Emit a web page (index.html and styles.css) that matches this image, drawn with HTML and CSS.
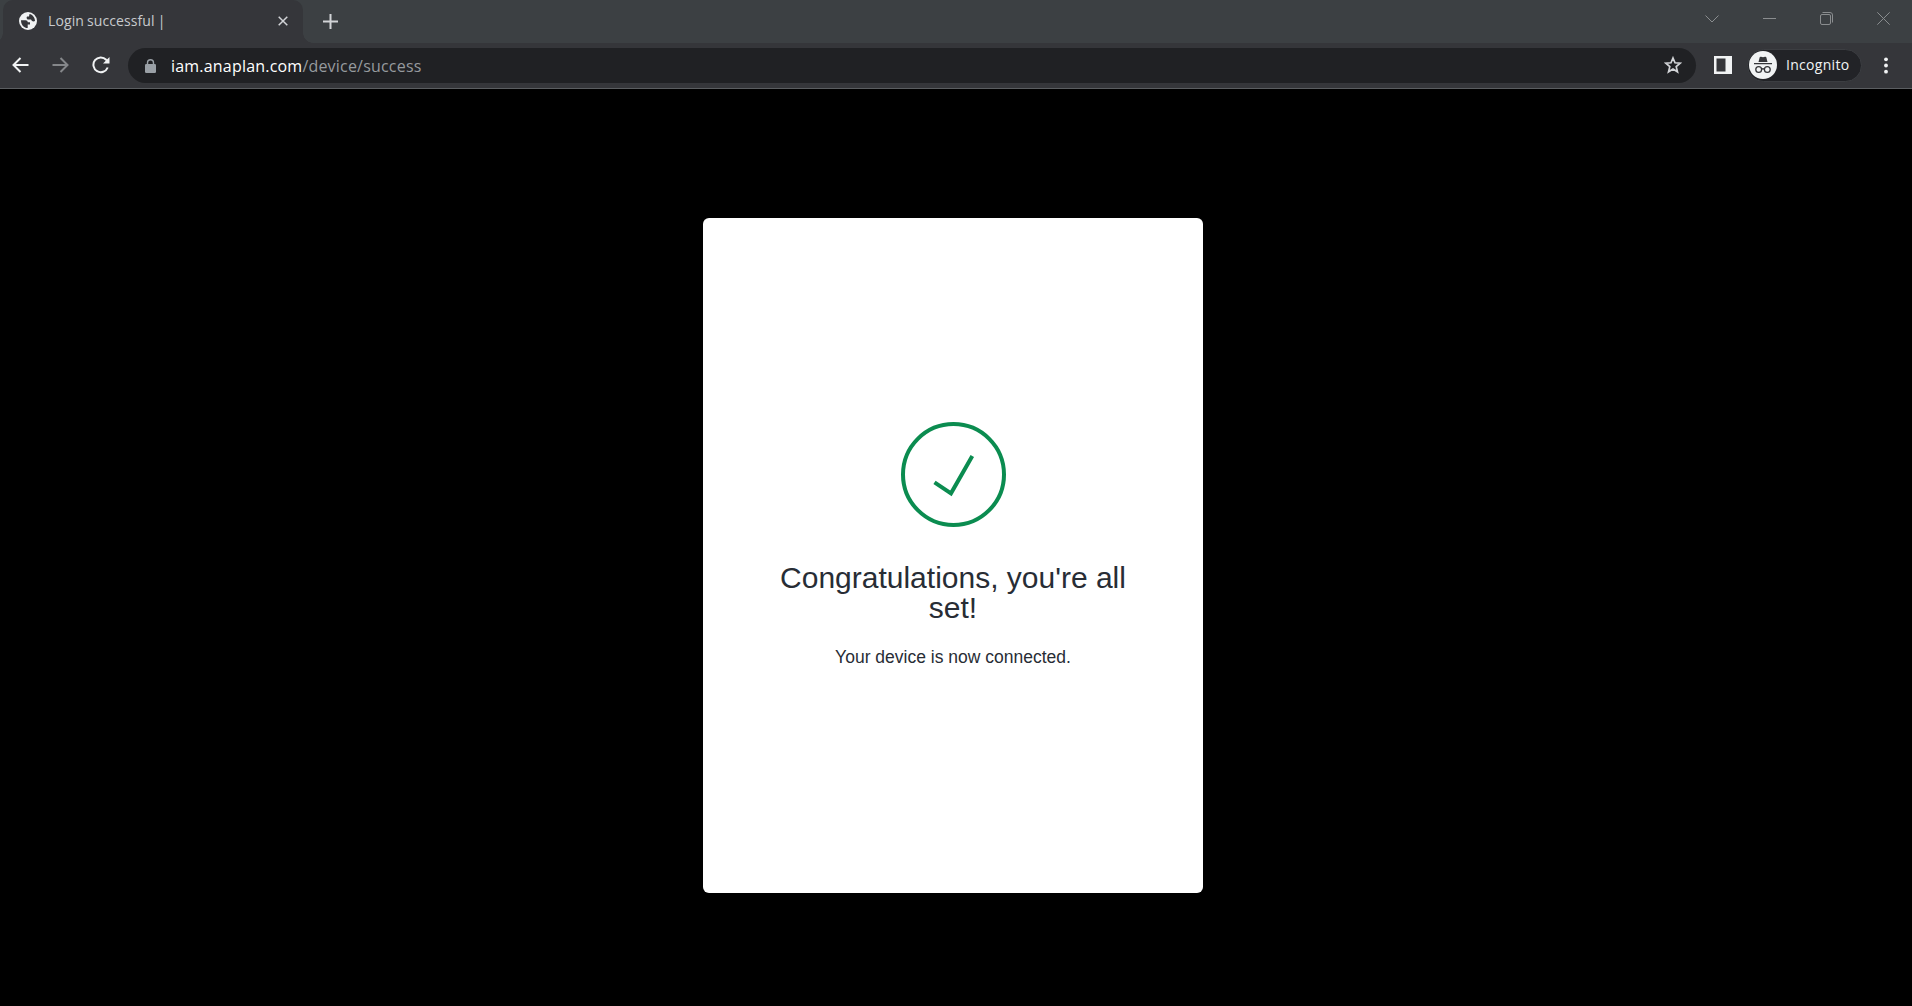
FILE: index.html
```html
<!DOCTYPE html>
<html lang="en">
<head>
<meta charset="utf-8">
<title>Login successful |</title>
<link rel="stylesheet" href="styles.css">
</head>
<body>
<div class="browser">
  <header class="tabstrip">
    <div class="tab">
      <svg class="globe" width="18" height="18" viewBox="0 0 18 18"><circle cx="9" cy="9" r="9" fill="#f1f3f4"/><path d="M2 8.200H6.500Q8.800 8.300 8.800 10.300H11V12.500H8.700V16C5 16 2 13 2 8.200ZM10.500 2C13.500 2.600 16 5.500 16 9L14.500 9.500 13 9 12 7.500H8.500L7.500 6 8 4.500H10Z" fill="#35363a"/></svg>
      <span class="tab-title">Login successful |</span>
      <svg class="tab-close" width="10" height="10" viewBox="0 0 10 10"><path d="M.7.7 9.300 9.300M9.300.7.7 9.300" stroke="#d2d4d7" stroke-width="1.500"/></svg>
    </div>
    <svg class="new-tab" width="15" height="15" viewBox="0 0 15 15"><path d="M7.500 0V15M0 7.500H15" stroke="#d2d4d7" stroke-width="2"/></svg>
    <div class="window-controls">
      <svg width="14" height="8" viewBox="0 0 14 8"><path d="M.5.5 7 7 13.500.5"/></svg>
      <svg width="13" height="13" viewBox="0 0 13 13"><path d="M0 6.500H13"/></svg>
      <svg width="13" height="13" viewBox="0 0 13 13"><rect x=".5" y="2.500" width="10" height="10" rx="1.500"/><path d="M2.500.5H10A2.500 2.500 0 0 1 12.500 3V10.500"/></svg>
      <svg width="13" height="13" viewBox="0 0 13 13"><path d="M.3.3 12.700 12.700M12.700.3.3 12.700"/></svg>
    </div>
  </header>
  <nav class="toolbar">
    <svg class="nav-icon" width="17" height="16" viewBox="0 0 17 16"><path d="M16.500 8H1.500M8.500 1 1.500 8 8.500 15" stroke="#f1f3f4"/></svg>
    <svg class="nav-icon" width="17" height="16" viewBox="0 0 17 16"><path d="M.5 8H15.500M8.500 1 15.500 8 8.500 15" stroke="#85878a"/></svg>
    <svg class="nav-icon" width="18" height="18" viewBox="0 0 18 18"><path d="M15.700 11.500A7.400 7.400 0 1 1 14.200 3.700L16 5.500" stroke="#f1f3f4"/><path d="M17.500 1V7.500H11Z" fill="#f1f3f4"/></svg>
    <div class="omnibox">
      <svg class="lock" width="11" height="14" viewBox="0 0 11 14"><rect y="5" width="11" height="9" rx="1.300" fill="#9aa0a6"/><path d="M2.500 6V3.700a3 3 0 0 1 6 0V6" fill="none" stroke="#9aa0a6" stroke-width="1.400"/></svg>
      <span class="url"><span class="host">iam.anaplan.com</span><span class="path">/device/success</span></span>
      <svg class="star" width="18" height="18" viewBox="0 0 18 18"><path d="M9 2 11 6.800 16.200 7.200 12.200 10.600 13.500 15.800 9 13 4.500 15.800 5.800 10.600 1.800 7.200 7 6.800Z" fill="none" stroke="#d2d4d7" stroke-width="1.700"/></svg>
    </div>
    <svg class="side-panel" width="18" height="18" viewBox="0 0 18 18"><path fill-rule="evenodd" d="M0 0H18V18H0ZM2.500 2.500V15.500H11.500V2.500Z" fill="#f1f3f4"/></svg>
    <div class="profile">
      <svg width="28" height="28" viewBox="0 0 28 28"><circle cx="14" cy="14" r="14" fill="#f1f3f4"/><path d="M9.500 11 10.700 6.300Q11 5.500 12 5.800L14 6.300 16 5.800Q17 5.500 17.300 6.300L18.500 11ZM5 12H23V13.300H5Z" fill="#35363a"/><g fill="none" stroke="#35363a" stroke-width="1.300"><circle cx="9.700" cy="18.500" r="2.900"/><circle cx="18.300" cy="18.500" r="2.900"/><path d="M12.600 18.200Q14 17.300 15.400 18.200"/></g></svg>
      <span class="profile-name">Incognito</span>
    </div>
    <svg class="menu" width="4" height="17" viewBox="0 0 4 17"><g fill="#f1f3f4"><circle cx="2" cy="2.300" r="1.900"/><circle cx="2" cy="8.500" r="1.900"/><circle cx="2" cy="14.700" r="1.900"/></g></svg>
  </nav>
  <main class="page">
    <section class="card">
      <svg class="success" width="105" height="105" viewBox="0 0 105 105"><circle cx="52.500" cy="52.500" r="50.500"/><path d="M33.500 60.300 50 71.300 71.300 34"/></svg>
      <h1>Congratulations, you're all set!</h1>
      <p>Your device is now connected.</p>
    </section>
  </main>
</div>
</body>
</html>
```
FILE: styles.css
```css
* { box-sizing: border-box; }
body { margin: 0; background: #000; font-family: "Open Sans", "Noto Sans", sans-serif; }
svg { display: block; flex: none; }
.browser { display: flex; flex-direction: column; width: 100%; height: 100vh; overflow: hidden; }

.tabstrip { display: flex; height: 43px; padding-left: 3px; background: #3c4043; }
.tab { position: relative; display: flex; align-items: center; width: 300px; height: 43px; padding: 0 15px 2px 16px; background: #35363a; border-radius: 10px 10px 0 0; }
.tab::before, .tab::after { content: ""; position: absolute; bottom: 0; width: 10px; height: 10px; }
.tab::before { right: 100%; background: radial-gradient(circle at 0 0, transparent 9.5px, #35363a 10px); }
.tab::after { left: 100%; background: radial-gradient(circle at 100% 0, transparent 9.5px, #35363a 10px); }
.tab-title { flex: 1; margin-left: 11px; font-size: 14px; line-height: 20px; letter-spacing: 0.1px; word-spacing: -0.7px; color: #c8cacd; white-space: pre; }
.new-tab { margin: 14px 0 0 20px; }
.window-controls { display: flex; align-items: center; gap: 44px; height: 37px; margin-left: auto; padding-right: 22px; }
.window-controls svg { fill: none; stroke: #8a8d8f; stroke-width: 1; }

.toolbar { display: flex; align-items: center; height: 46px; padding: 0 24px 0 12px; background: #35363a; border-bottom: 1px solid #5b5e61; }
.nav-icon { fill: none; stroke-width: 2; margin: 0 23px 1px 0; }
.nav-icon:nth-child(3) { margin-right: 18px; }
.omnibox { display: flex; align-items: center; flex: 1; height: 35px; padding: 0 14px 0 17px; border-radius: 18px; background: #202124; }
.url { margin-left: 15px; flex: 1; font-size: 16px; line-height: 22px; letter-spacing: 0.2px; white-space: nowrap; }
.host { color: #fff; }
.path { color: #969a9e; }
.star { margin-bottom: 1px; }
.side-panel { margin: 0 0 1px 18px; }
.profile { display: flex; align-items: center; width: 115px; height: 33px; margin: 0 0 1px 15px; padding-left: 1px; border: 1px solid #3c3e42; border-radius: 17px; background: #222327; }
.profile-name { margin: 0 0 2px 9px; font-size: 14px; letter-spacing: 0.3px; color: #f1f3f4; }
.menu { margin: 0 0 1px 22px; }

.page { flex: 1; display: flex; justify-content: center; align-items: flex-start; padding: 129px 6px 0 0; background: #000; }
.card { display: flex; flex-direction: column; align-items: center; width: 500px; height: 675px; padding: 204px 70px 0; border-radius: 6px; background: #fff; color: #282d35; font-family: "Liberation Sans", Arial, sans-serif; text-align: center; }
.success { margin-left: 1px; fill: none; stroke: #0b8c50; stroke-width: 4; }
h1 { margin: 36px 0 0; font-size: 30px; line-height: 30px; font-weight: 400; }
p { margin: 22px 0 0; font-size: 17.5px; line-height: 24px; }
```
